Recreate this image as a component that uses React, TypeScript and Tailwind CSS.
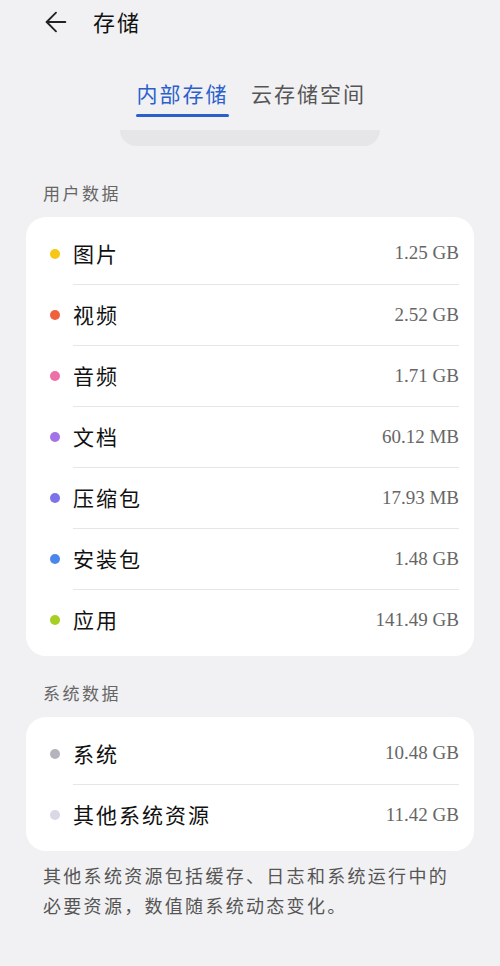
import { ArrowLeft } from 'lucide-react';

type Item = { name: string; size: string; color: string };

const USER_DATA: Item[] = [
  { name: '图片', size: '1.25 GB', color: 'bg-[#f6c714]' },
  { name: '视频', size: '2.52 GB', color: 'bg-[#f1603c]' },
  { name: '音频', size: '1.71 GB', color: 'bg-[#ee6ea6]' },
  { name: '文档', size: '60.12 MB', color: 'bg-[#a273e6]' },
  { name: '压缩包', size: '17.93 MB', color: 'bg-[#7c72ea]' },
  { name: '安装包', size: '1.48 GB', color: 'bg-[#4a86ec]' },
  { name: '应用', size: '141.49 GB', color: 'bg-[#a6cf22]' },
];

const SYSTEM_DATA: Item[] = [
  { name: '系统', size: '10.48 GB', color: 'bg-[#b4b4bc]' },
  { name: '其他系统资源', size: '11.42 GB', color: 'bg-[#d8d8e6]' },
];

const CJK = "font-['Noto_Sans_CJK_SC',sans-serif]";
const NUM = "font-['Liberation_Serif','Noto_Sans_CJK_SC',serif]";

function Card({ items }: { items: Item[] }) {
  return (
    <div className="mx-[26px] bg-white rounded-[20px] py-[6px]">
      {items.map((it, i) => (
        <div key={it.name} className="flex items-center h-[61px]">
          <div className="w-[47px] flex justify-end pr-[13px]">
            <span className={`w-[10px] h-[10px] rounded-full ${it.color}`} />
          </div>
          <div
            className={`flex-1 h-full flex items-center justify-between mr-[15px] ${
              i > 0 ? 'border-t border-[#e6e6e8]' : ''
            }`}
          >
            <span className={`${CJK} text-[21px] text-[#111] tracking-[2px]`}>{it.name}</span>
            <span className={`${NUM} text-[19px] text-[#666]`}>{it.size}</span>
          </div>
        </div>
      ))}
    </div>
  );
}

export default function App() {
  return (
    <div className={`min-h-[966px] w-[500px] bg-[#f1f1f3] ${CJK}`}>
      {/* Header */}
      <div className="flex items-center h-[44px] pl-[40px]">
        <ArrowLeft className="w-[32px] h-[32px] text-[#222]" strokeWidth={1.4} />
        <span className="ml-[21px] text-[22px] text-[#111] tracking-[2px] leading-none -mt-[2px]">存储</span>
      </div>

      {/* Tabs */}
      <div className="flex justify-center gap-[22px] mt-[34px] pl-[2px]">
        <div className="flex flex-col items-center">
          <span className="text-[21px] text-[#2a5fcc] tracking-[2px] leading-[30px]">内部存储</span>
          <span className="mt-[6px] w-[93px] h-[3px] rounded-full bg-[#2a5fcc]" />
        </div>
        <span className="text-[21px] text-[#555] tracking-[2px] leading-[30px]">云存储空间</span>
      </div>

      {/* Clipped overview panel */}
      <div className="mx-auto mt-[13px] w-[260px] h-[16px] bg-[#e6e6e8] rounded-b-[18px]" />

      <div className="pl-[43px] pt-[35px] pb-[12px] text-[17px] text-[#666] tracking-[2.5px] leading-[24px]">
        用户数据
      </div>
      <Card items={USER_DATA} />

      <div className="pl-[43px] pt-[25px] pb-[12px] text-[17px] text-[#666] tracking-[2.5px] leading-[24px]">
        系统数据
      </div>
      <Card items={SYSTEM_DATA} />

      <p className="px-[43px] pt-[9px] text-[18px] text-[#555] leading-[30px] tracking-[2.3px]">
        其他系统资源包括缓存、日志和系统运行中的必要资源，数值随系统动态变化。
      </p>
    </div>
  );
}
